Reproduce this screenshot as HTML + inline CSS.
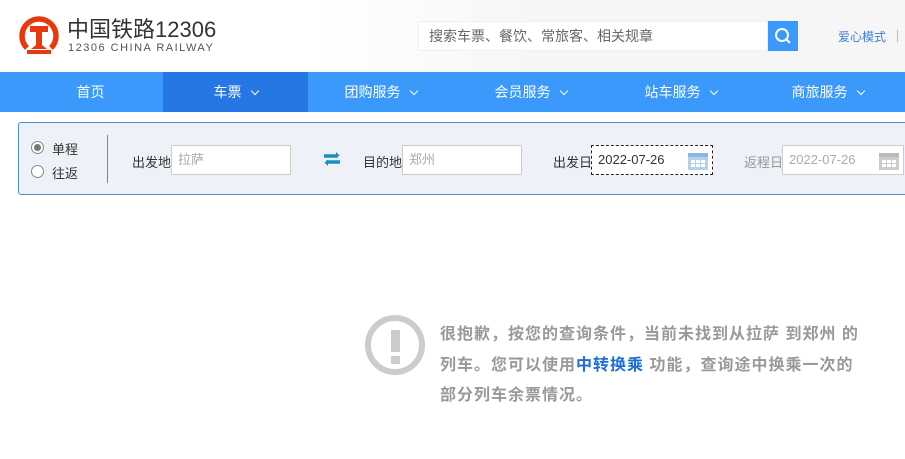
<!DOCTYPE html>
<html><head><meta charset="utf-8"><style>
*{margin:0;padding:0;box-sizing:border-box}
body{width:905px;height:459px;overflow:hidden;background:#fff;font-family:"Liberation Sans","Noto Sans CJK SC",sans-serif;position:relative;font-size:13px;color:#333}
.a{position:absolute}
.hdr{left:0;top:0;width:905px;height:72px;background:linear-gradient(90deg,#fff 0%,#fff 35%,#f6f6f6 60%,#f6f6f6 100%)}
.nav{left:0;top:72px;width:905px;height:40px;background:#3b99fc}
.nav div{position:absolute;top:0;height:40px;line-height:40px;color:#fff;font-size:14px;text-align:center;width:145px}
.nav span{display:inline-block;width:6px;height:6px;border-right:1.5px solid #fff;border-bottom:1.5px solid #fff;transform:rotate(45deg);margin-left:10px;position:relative;top:-3px}
.inp{height:30px;border:1px solid #ccc;background:#fff;font-size:13px;line-height:28px;padding-left:6px;color:#aaa}
.cal{position:absolute;right:4px;top:5px;width:20px;height:19px}
</style></head><body>
<div class="a hdr"></div>
<svg class="a" style="left:18px;top:9px" width="42" height="48" viewBox="0 0 42 48">
<path d="M9 39 A17 17 0 1 1 33 39" fill="none" stroke="#e8380d" stroke-width="5.5"/>
<path d="M12 17 h18 v6 h-6 v13 l5 4 h-16 l5 -4 v-13 h-6z" fill="#e8380d"/>
<rect x="9" y="41" width="24" height="4" fill="#e8380d"/>
</svg>
<div class="a" style="left:67px;top:12px;font-size:22px;color:#333">中国铁路12306</div>
<div class="a" style="left:68px;top:42px;font-size:11px;color:#555;letter-spacing:1.5px">12306 CHINA RAILWAY</div>
<div class="a" style="left:418px;top:21px;width:350px;height:30px;background:#fff;border:1px solid #eee;font-size:14px;color:#666;line-height:28px;padding-left:10px">搜索车票、餐饮、常旅客、相关规章</div>
<div class="a" style="left:768px;top:21px;width:30px;height:30px;background:#3b99fc">
<svg width="30" height="30"><circle cx="14" cy="14" r="6" fill="none" stroke="#fff" stroke-width="2"/><path d="M18.5 18.5 L22 22" stroke="#fff" stroke-width="2"/></svg></div>
<div class="a" style="left:838px;top:28px;font-size:12px;color:#3b7fd6">爱心模式</div>
<div class="a" style="left:897px;top:30px;width:1px;height:12px;background:#bbb"></div>
<div class="a nav">
<div style="left:18px">首页</div>
<div style="left:163px;background:#2676e3">车票<span></span></div>
<div style="left:308px">团购服务<span></span></div>
<div style="left:458px">会员服务<span></span></div>
<div style="left:608px">站车服务<span></span></div>
<div style="left:755px">商旅服务<span></span></div>
</div>
<div class="a" style="left:18px;top:122px;width:900px;height:73px;background:#eef1f8;border:1px solid #4d92c7;border-radius:3px"></div>
<div class="a" style="left:31px;top:141px;width:13px;height:13px;border:1px solid #888;border-radius:50%;background:#fff"><div style="margin:2px;width:7px;height:7px;border-radius:50%;background:#777"></div></div>
<div class="a" style="left:52px;top:139px">单程</div>
<div class="a" style="left:31px;top:165px;width:13px;height:13px;border:1px solid #888;border-radius:50%;background:#fff"></div>
<div class="a" style="left:52px;top:163px">往返</div>
<div class="a" style="left:107px;top:135px;width:1px;height:48px;background:#4d92c7"></div>
<div class="a" style="left:132px;top:152px">出发地</div>
<div class="a inp" style="left:171px;top:145px;width:120px">拉萨</div>
<svg class="a" style="left:323px;top:152px" width="18" height="14" viewBox="0 0 18 14"><path d="M1 4 h14 M3 10 h14" stroke="#1a8fb8" stroke-width="3.5"/><path d="M13 0 l4 4 l-4 0z M5 14 l-4 -4 l4 0z" fill="#1a8fb8"/></svg>
<div class="a" style="left:363px;top:152px">目的地</div>
<div class="a inp" style="left:402px;top:145px;width:120px">郑州</div>
<div class="a" style="left:553px;top:152px">出发日</div>
<div class="a inp" style="left:591px;top:145px;width:122px;border:1px dashed #222;color:#333">2022-07-26<svg class="cal" viewBox="0 0 20 19"><rect x="0" y="2" width="20" height="17" fill="#b5d0ea"/><rect x="0" y="2" width="20" height="4" fill="#8fb6dc"/><g fill="#fff"><rect x="3" y="9" width="4" height="3"/><rect x="8" y="9" width="4" height="3"/><rect x="13" y="9" width="4" height="3"/><rect x="3" y="13" width="4" height="3"/><rect x="8" y="13" width="4" height="3"/><rect x="13" y="13" width="4" height="3"/></g></svg></div>
<div class="a" style="left:744px;top:152px;color:#999">返程日</div>
<div class="a inp" style="left:782px;top:145px;width:122px;color:#aaa">2022-07-26<svg class="cal" viewBox="0 0 20 19"><rect x="0" y="2" width="20" height="17" fill="#ccc"/><rect x="0" y="2" width="20" height="4" fill="#bbb"/><g fill="#fff"><rect x="3" y="9" width="4" height="3"/><rect x="8" y="9" width="4" height="3"/><rect x="13" y="9" width="4" height="3"/><rect x="3" y="13" width="4" height="3"/><rect x="8" y="13" width="4" height="3"/><rect x="13" y="13" width="4" height="3"/></g></svg></div>
<div class="a" style="left:365px;top:315px;width:60px;height:60px;border:6px solid #ccc;border-radius:50%"></div>
<div class="a" style="left:391px;top:330px;width:9px;height:22px;background:#ccc"></div>
<div class="a" style="left:391px;top:356px;width:9px;height:8px;background:#ccc"></div>
<div class="a" style="left:440px;top:320px;width:440px;font-size:16px;font-weight:bold;color:#999;line-height:30.5px;letter-spacing:1px">很抱歉，按您的查询条件，当前未找到从拉萨 到郑州 的<br>列车。您可以使用<span style="color:#1a6fd6">中转换乘</span> 功能，查询途中换乘一次的<br>部分列车余票情况。</div>
</body></html>
